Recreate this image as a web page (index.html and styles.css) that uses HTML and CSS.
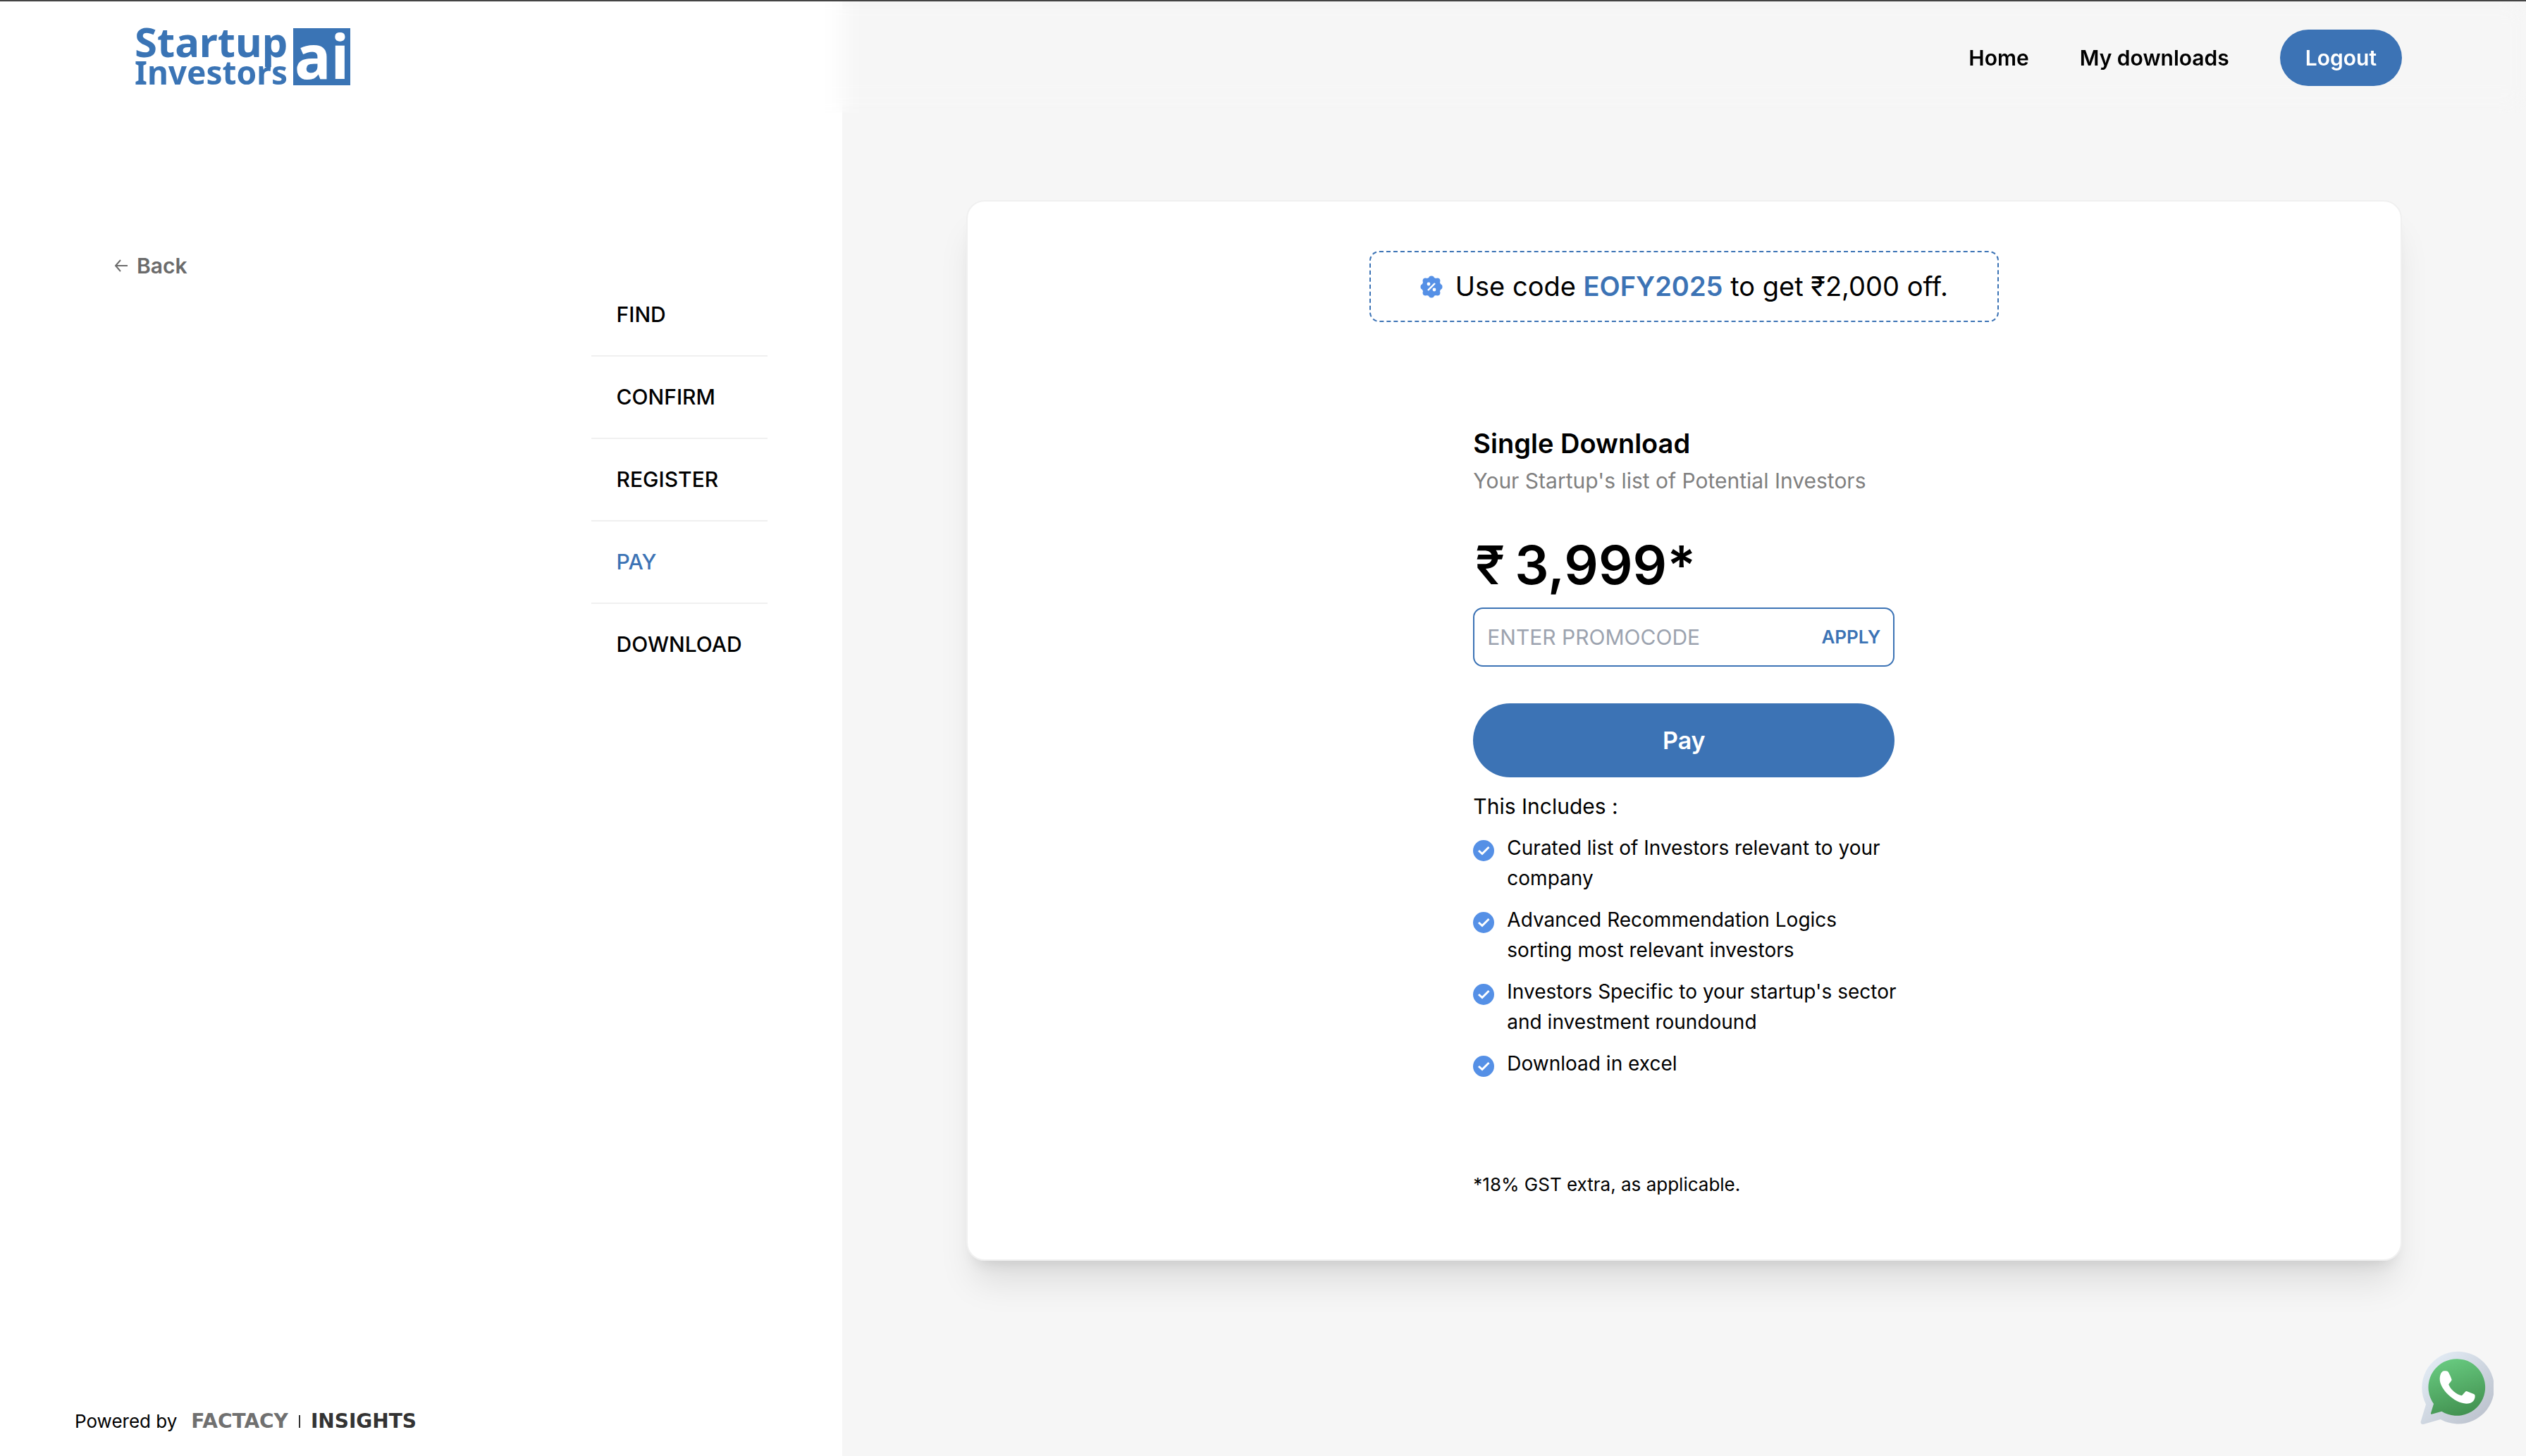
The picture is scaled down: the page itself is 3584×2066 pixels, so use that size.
FILE: index.html
```html
<!DOCTYPE html>
<html lang="en">
<head>
<meta charset="utf-8">
<meta name="viewport" content="width=device-width, initial-scale=1">
<title>Startup Investors AI – Pay</title>
<link rel="stylesheet" href="styles.css">
</head>
<body>
<svg class="sprite" aria-hidden="true">
  <symbol id="check" viewBox="0 0 30 30">
    <circle cx="15" cy="15" r="15" fill="#5590e6"/>
    <path d="M8 15l5 4.500L22.500 10" fill="none" stroke="#fff" stroke-width="3"/>
  </symbol>
</svg>
<header class="topbar">
  <a class="logo" href="#" aria-label="Startup Investors ai">
    <svg width="306" height="128" viewBox="0 -20 306 128">
      <text class="logo-text" x="0" y="44" font-size="58">Startup</text>
      <text class="logo-text" x="0" y="83" font-size="46">Investors</text>
      <rect x="225" y="3" width="81" height="81" fill="#3a74b5"/>
      <text class="logo-text logo-ai" x="227" y="75" font-size="86">ai</text>
    </svg>
  </a>
  <nav class="nav">
    <a href="#">Home</a>
    <a href="#">My downloads</a>
    <button class="logout" type="button">Logout</button>
  </nav>
</header>
<div class="page">
  <aside class="side">
    <div class="side-main">
      <a class="back" href="#">
        <svg width="20" height="20" viewBox="0 0 20 20" fill="none" stroke="currentColor" stroke-width="2"><path d="M19 10H2M9 2L2 10l7 8"/></svg>
        Back
      </a>
      <ol class="steps">
        <li>FIND</li>
        <li>CONFIRM</li>
        <li>REGISTER</li>
        <li class="current" aria-current="step">PAY</li>
        <li>DOWNLOAD</li>
      </ol>
    </div>
    <footer class="powered">
      <span>Powered by</span>
      <span class="brand"><span class="brand-name">FACTACY</span><span class="brand-bar"></span><span class="brand-unit">INSIGHTS</span></span>
    </footer>
  </aside>
  <main class="content">
    <section class="card">
      <p class="offer">
        <svg width="32" height="32" viewBox="0 0 32 32">
          <g fill="#5590e6">
            <circle cx="16" cy="16" r="13.500"/>
            <circle cx="16" cy="4.500" r="4"/><circle cx="16" cy="27.500" r="4"/>
            <circle cx="4.500" cy="16" r="4"/><circle cx="27.500" cy="16" r="4"/>
            <circle cx="7.600" cy="7.600" r="4"/><circle cx="24.400" cy="24.400" r="4"/>
            <circle cx="7.600" cy="24.400" r="4"/><circle cx="24.400" cy="7.600" r="4"/>
          </g>
          <path d="M21 11L11 21" stroke="#fff" stroke-width="2.400"/>
          <circle cx="12" cy="12" r="2.400" fill="#fff"/><circle cx="20" cy="20" r="2.400" fill="#fff"/>
        </svg>
        <span>Use code <strong>EOFY2025</strong> to get ₹2,000 off.</span>
      </p>
      <div class="plan">
        <h1>Single Download</h1>
        <p class="subtitle">Your Startup's list of Potential Investors</p>
        <p class="price"><span class="currency">₹</span><span>3,999*</span></p>
        <form class="promo">
          <input type="text" aria-label="Promo code" placeholder="ENTER PROMOCODE">
          <button type="button">APPLY</button>
        </form>
        <button class="pay" type="button">Pay</button>
        <h2>This Includes :</h2>
        <ul class="features">
          <li><svg width="30" height="30"><use href="#check"/></svg><span>Curated list of Investors relevant to your company</span></li>
          <li><svg width="30" height="30"><use href="#check"/></svg><span>Advanced Recommendation Logics sorting most relevant investors</span></li>
          <li><svg width="30" height="30"><use href="#check"/></svg><span>Investors Specific to your startup's sector and investment roundound</span></li>
          <li><svg width="30" height="30"><use href="#check"/></svg><span>Download in excel</span></li>
        </ul>
        <p class="tax">*18% GST extra, as applicable.</p>
      </div>
    </section>
  </main>
</div>
<a class="whatsapp" href="#" aria-label="Chat on WhatsApp">
  <svg width="104" height="104" viewBox="163 653 312 312">
    <defs>
      <linearGradient id="ring" x1="0" y1="0" x2="1" y2="1"><stop offset=".1" stop-color="#e3ecf5"/><stop offset=".9" stop-color="#bcc2cd"/></linearGradient>
      <linearGradient id="green" x1=".3" y1="0" x2=".6" y2="1"><stop offset="0" stop-color="#68ca80"/><stop offset="1" stop-color="#429150"/></linearGradient>
    </defs>
    <path fill="url(#ring)" d="M187 880A154 154 0 1 1 249 944L176 965Q163 966 165 954Z"/>
    <path fill="url(#green)" d="M220 878A121 121 0 1 1 254 910L211 922Q207 922 208 918Z"/>
    <path fill="#fff" d="M259 739C266 737 276 737 280 740C284 743 297 772 297 776C297 780 285 791 284 796C292 817 316 838 340 843L355 826Q358 823 362 825L392 837Q396 839 396 844C396 864 383 877 359 877C307 875 246 815 246 773C246 756 251 744 259 739Z"/>
  </svg>
</a>
</body>
</html>
```
FILE: styles.css
```css
* { box-sizing: border-box; margin: 0; padding: 0; }

:root {
  --blue: #3c73b5;
  --line: #f0f0f0;
}

body {
  font-family: Inter, "Liberation Sans", sans-serif;
  font-size: 30px;
  line-height: 44px;
  color: #000;
  background: #fff;
}

a { color: inherit; text-decoration: none; }
ol, ul { list-style: none; }
button, input { font: inherit; border: 0; background: none; }
button { cursor: pointer; }
svg { display: block; flex: none; }
.sprite { position: absolute; width: 0; height: 0; }

.topbar {
  position: fixed;
  inset: 0 0 auto;
  z-index: 1;
  height: 160px;
  padding: 0 176px 0 191px;
  border-top: 2px solid #444;
  display: flex;
  align-items: center;
  justify-content: space-between;
  backdrop-filter: blur(16px);
}
.logo svg { overflow: visible; }
.logo-text {
  font-family: "Noto Sans", "Open Sans", sans-serif;
  font-weight: 700;
  fill: #3a74b5;
}
.logo-ai { fill: #fff; }
.nav {
  display: flex;
  align-items: center;
  gap: 72px;
  padding-top: 2px;
  font-weight: 600;
}
.logout {
  height: 80px;
  padding: 0 36px;
  border-radius: 40px;
  color: #fff;
  background: var(--blue);
}

.page {
  display: grid;
  grid-template-columns: 1fr 2fr;
  min-height: 100vh;
}

.side {
  display: flex;
  flex-direction: column;
  justify-content: space-between;
  padding: 355px 106px 38px;
}
.side-main {
  display: flex;
  justify-content: space-between;
  align-items: flex-start;
  padding-left: 56px;
}
.back {
  display: flex;
  align-items: center;
  gap: 12px;
  font-weight: 600;
  color: #6b6b6b;
}
.steps { margin-top: 34px; line-height: 45px; font-weight: 500; }
.steps li { padding: 35px 36px; border-bottom: 2px solid var(--line); }
.steps li:last-child { border-bottom: 0; }
.steps .current { color: var(--blue); }

.powered {
  display: flex;
  align-items: center;
  gap: 20px;
  font-size: 26px;
  line-height: 36px;
}
.brand {
  display: flex;
  align-items: center;
  gap: 15px;
  font-family: "DejaVu Sans", sans-serif;
  font-size: 28px;
  font-weight: 700;
}
.brand-name { color: #707070; }
.brand-unit { color: #333; }
.brand-bar { width: 2px; height: 18px; background: #333; }

.content {
  padding: 284px 176px;
  background: #f6f6f6;
}
.card {
  display: flex;
  flex-direction: column;
  align-items: center;
  padding: 70px 70px 88px;
  border: 2px solid var(--line);
  border-radius: 26px;
  background: #fff;
  box-shadow: 0 40px 50px -10px rgba(0, 0, 0, .1), 0 16px 20px -12px rgba(0, 0, 0, .1);
}
.offer {
  display: flex;
  align-items: center;
  gap: 18px;
  padding: 24px 70px;
  border: 2px dashed var(--blue);
  border-radius: 14px;
  font-size: 38px;
  line-height: 49px;
}
.offer strong { font-weight: 600; color: var(--blue); }

.plan { width: 598px; margin-top: 148px; }
.plan h1 { font-size: 38px; line-height: 48px; font-weight: 600; }
.subtitle { margin-top: 7px; color: #808080; }
.price {
  display: flex;
  gap: 14px;
  margin-top: 53px;
  padding-left: 3px;
  font-size: 76px;
  line-height: 88px;
  font-weight: 600;
}
.currency { font-weight: 500; }
.promo {
  display: flex;
  align-items: center;
  justify-content: space-between;
  height: 84px;
  margin-top: 17px;
  padding: 0 18px;
  border: 2px solid var(--blue);
  border-radius: 14px;
}
.promo input { flex: 1; min-width: 0; outline: 0; }
.promo input::placeholder { color: #9ca3af; }
.promo button { font-size: 26px; font-weight: 600; color: var(--blue); }
.pay {
  display: block;
  width: 100%;
  height: 105px;
  margin-top: 52px;
  border-radius: 53px;
  font-size: 34px;
  font-weight: 600;
  color: #fff;
  background: var(--blue);
}
.plan h2 { margin-top: 19px; font-size: 30px; font-weight: 400; }
.features {
  display: grid;
  gap: 16px;
  margin: 16px -16px 0 0;
  font-size: 28px;
  line-height: 43px;
}
.features li { display: flex; gap: 18px; }
.features svg { margin-top: 10px; }
.tax { margin-top: 132px; font-size: 26px; line-height: 36px; }

.whatsapp { position: fixed; right: 46px; bottom: 45px; z-index: 1; }
```
